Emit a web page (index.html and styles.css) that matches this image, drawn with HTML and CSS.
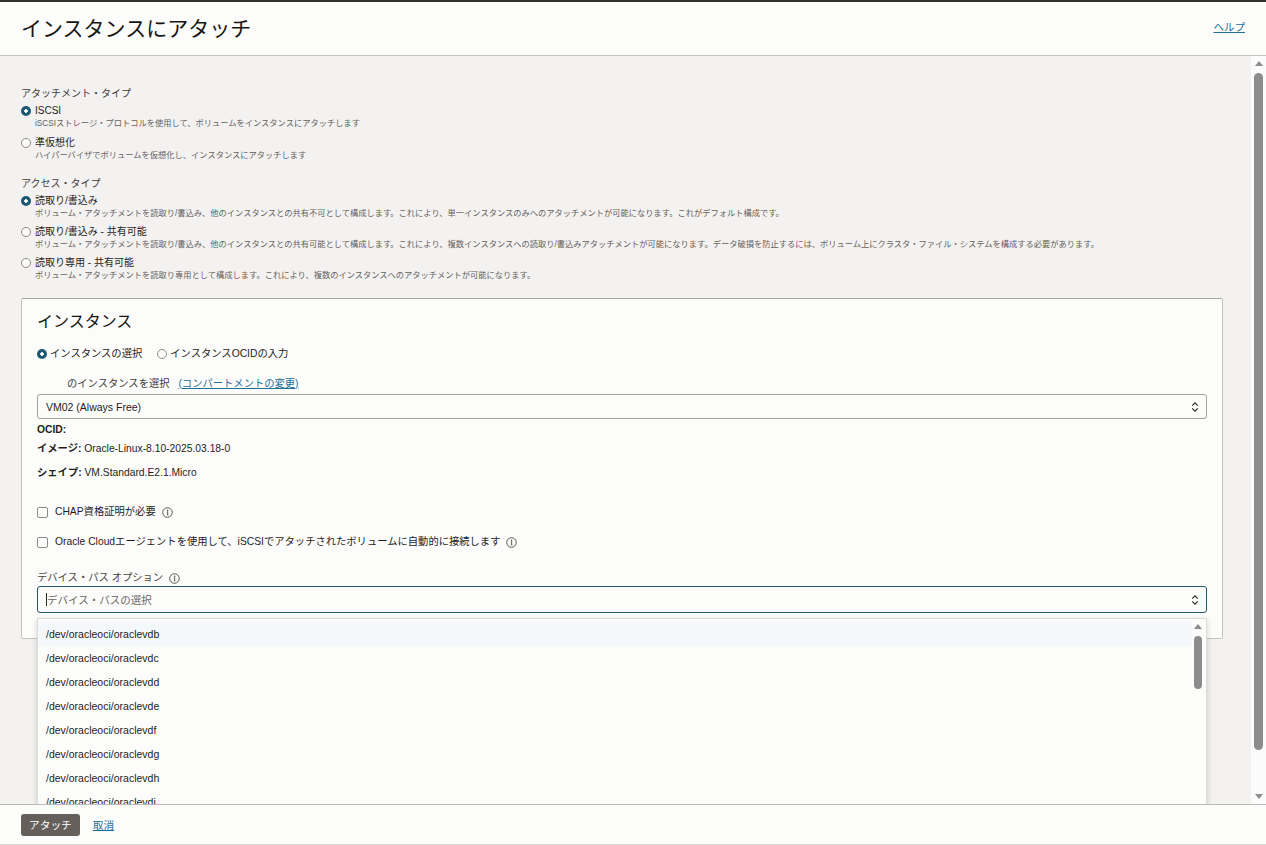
FILE: index.html
```html
<!DOCTYPE html>
<html lang="ja">
<head>
<meta charset="utf-8">
<title>インスタンスにアタッチ</title>
<link rel="stylesheet" href="styles.css">
</head>
<body>
<div class="app">
  <header class="hdr">
    <h1 class="title">インスタンスにアタッチ</h1>
    <a class="help" href="#">ヘルプ</a>
  </header>

  <div class="main">
    <div class="scroll">
      <div class="group">
        <div class="glabel">アタッチメント・タイプ</div>
        <div class="opt">
          <div class="rrow"><span class="radio on"></span><span class="rlabel">ISCSI</span></div>
          <div class="desc">iSCSIストレージ・プロトコルを使用して、ボリュームをインスタンスにアタッチします</div>
        </div>
        <div class="opt">
          <div class="rrow"><span class="radio"></span><span class="rlabel">準仮想化</span></div>
          <div class="desc">ハイパーバイザでボリュームを仮想化し、インスタンスにアタッチします</div>
        </div>
      </div>

      <div class="group g2">
        <div class="glabel">アクセス・タイプ</div>
        <div class="opt">
          <div class="rrow"><span class="radio on"></span><span class="rlabel">読取り/書込み</span></div>
          <div class="desc">ボリューム・アタッチメントを読取り/書込み、他のインスタンスとの共有不可として構成します。これにより、単一インスタンスのみへのアタッチメントが可能になります。これがデフォルト構成です。</div>
        </div>
        <div class="opt">
          <div class="rrow"><span class="radio"></span><span class="rlabel">読取り/書込み - 共有可能</span></div>
          <div class="desc">ボリューム・アタッチメントを読取り/書込み、他のインスタンスとの共有可能として構成します。これにより、複数インスタンスへの読取り/書込みアタッチメントが可能になります。データ破損を防止するには、ボリューム上にクラスタ・ファイル・システムを構成する必要があります。</div>
        </div>
        <div class="opt">
          <div class="rrow"><span class="radio"></span><span class="rlabel">読取り専用 - 共有可能</span></div>
          <div class="desc">ボリューム・アタッチメントを読取り専用として構成します。これにより、複数のインスタンスへのアタッチメントが可能になります。</div>
        </div>
      </div>

      <section class="panel">
        <h2 class="ptitle">インスタンス</h2>
        <div class="prow">
          <span class="pradio"><span class="radio on"></span><span>インスタンスの選択</span></span>
          <span class="pradio"><span class="radio"></span><span>インスタンスOCIDの入力</span></span>
        </div>
        <div class="cmp">のインスタンスを選択 <a class="link" href="#">(コンパートメントの変更)</a></div>
        <div class="select">
          <span class="sval">VM02 (Always Free)</span>
          <svg class="chev" viewBox="0 0 8 12" width="8" height="12"><path d="M1.2 4.6 L4 1.8 L6.8 4.6 M1.2 7.4 L4 10.2 L6.8 7.4" fill="none" stroke="#2a2725" stroke-width="1.1"/></svg>
        </div>
        <div class="kv k1"><b>OCID:</b></div>
        <div class="kv k2"><b>イメージ:</b> Oracle-Linux-8.10-2025.03.18-0</div>
        <div class="kv k3"><b>シェイプ:</b> VM.Standard.E2.1.Micro</div>

        <div class="chk c1"><span class="box"></span><span>CHAP資格証明が必要</span>
          <svg class="info" viewBox="0 0 12 12" width="11" height="11"><circle cx="6" cy="6" r="5.2" fill="none" stroke="#3b3734" stroke-width="0.9"/><circle cx="6.2" cy="3.5" r="0.75" fill="#3b3734"/><path d="M5.2 5.3 H6.4 L5.9 8.6 H7" fill="none" stroke="#3b3734" stroke-width="0.9"/></svg>
        </div>
        <div class="chk c2"><span class="box"></span><span>Oracle Cloudエージェントを使用して、iSCSIでアタッチされたボリュームに自動的に接続します</span>
          <svg class="info" viewBox="0 0 12 12" width="11" height="11"><circle cx="6" cy="6" r="5.2" fill="none" stroke="#3b3734" stroke-width="0.9"/><circle cx="6.2" cy="3.5" r="0.75" fill="#3b3734"/><path d="M5.2 5.3 H6.4 L5.9 8.6 H7" fill="none" stroke="#3b3734" stroke-width="0.9"/></svg>
        </div>

        <div class="dlabel"><span>デバイス・パス オプション</span>
          <svg class="info" viewBox="0 0 12 12" width="11" height="11"><circle cx="6" cy="6" r="5.2" fill="none" stroke="#3b3734" stroke-width="0.9"/><circle cx="6.2" cy="3.5" r="0.75" fill="#3b3734"/><path d="M5.2 5.3 H6.4 L5.9 8.6 H7" fill="none" stroke="#3b3734" stroke-width="0.9"/></svg>
        </div>
        <div class="dwrap">
          <div class="select focus">
            <span class="caret"></span><span class="ph">デバイス・パスの選択</span>
            <svg class="chev" viewBox="0 0 8 12" width="8" height="12"><path d="M1.2 4.6 L4 1.8 L6.8 4.6 M1.2 7.4 L4 10.2 L6.8 7.4" fill="none" stroke="#2a2725" stroke-width="1.1"/></svg>
          </div>
          <div class="drop">
            <ul class="dlist">
              <li class="hl">/dev/oracleoci/oraclevdb</li>
              <li>/dev/oracleoci/oraclevdc</li>
              <li>/dev/oracleoci/oraclevdd</li>
              <li>/dev/oracleoci/oraclevde</li>
              <li>/dev/oracleoci/oraclevdf</li>
              <li>/dev/oracleoci/oraclevdg</li>
              <li>/dev/oracleoci/oraclevdh</li>
              <li>/dev/oracleoci/oraclevdi</li>
            </ul>
            <div class="dscroll">
              <span class="arr up"></span>
              <span class="dthumb"></span>
            </div>
          </div>
        </div>
      </section>
    </div>
    <div class="vscroll">
      <span class="arr up"></span>
      <span class="thumb"></span>
      <span class="arr down"></span>
    </div>
  </div>

  <footer class="ftr">
    <button class="btn" type="button">アタッチ</button>
    <a class="link cancel" href="#">取消</a>
  </footer>
</div>
</body>
</html>
```

FILE: styles.css
```css
* { box-sizing: border-box; }
html, body { margin: 0; padding: 0; }
body {
  font-family: "Liberation Sans", "Noto Sans CJK JP", sans-serif;
  color: #1f1d1b;
  background: #f3f2f1;
}
.app {
  height: 845px;
  display: flex;
  flex-direction: column;
  overflow: hidden;
}

/* header */
.hdr {
  flex: 0 0 56px;
  border-top: 2px solid #34302d;
  border-bottom: 1px solid #c6c3bf;
  background: #fcfcfb;
  display: flex;
  align-items: center;
  justify-content: space-between;
  padding: 0 21px;
}
.title {
  margin: 0;
  font-size: 21px;
  font-weight: 400;
  line-height: 26px;
  color: #161513;
}
.help {
  font-size: 10.5px;
  line-height: 14px;
  color: #1f6f9a;
  text-decoration: underline;
  margin-top: -3px;
}
.link { color: #1f6f9a; text-decoration: underline; }

/* main scroll area */
.main { flex: 1; display: flex; min-height: 0; }
.scroll {
  flex: 1;
  overflow: hidden;
  padding: 31px 28px 0 21px;
}
.vscroll {
  flex: 0 0 15px;
  background: #fbfbfb;
  display: flex;
  flex-direction: column;
  align-items: center;
  padding: 5px 0 5px;
}
.arr { width: 0; height: 0; border-left: 4px solid transparent; border-right: 4px solid transparent; }
.arr.up { border-bottom: 5px solid #8c8c8c; }
.arr.down { border-top: 5px solid #8c8c8c; margin-top: auto; }
.thumb {
  width: 9px;
  height: 677px;
  margin-top: 7px;
  background: #8c8c8c;
  border-radius: 5px;
}

/* radio groups */
.glabel {
  font-size: 10px;
  line-height: 14px;
  color: #3f3b38;
}
.g2 { margin-top: 15px; }
.opt { margin-top: 6px; }
.glabel + .opt { margin-top: 3px; }
.g2 .opt { margin-top: 5px; }
.g2 .glabel + .opt { margin-top: 3px; }
.rrow {
  display: flex;
  align-items: center;
  font-size: 10px;
  line-height: 14px;
  color: #1f1d1b;
}
.radio {
  flex: 0 0 10px;
  width: 10px;
  height: 10px;
  border-radius: 50%;
  border: 1px solid #8e8984;
  background: #fff;
  margin-right: 4px;
}
.radio.on {
  border: none;
  background: radial-gradient(circle, #fff 0 1.5px, #1d5a72 2px);
}
.desc {
  font-size: 8.25px;
  line-height: 12px;
  color: #66615d;
  padding-left: 14px;
  white-space: nowrap;
}

/* instance panel */
.panel {
  margin-top: 16px;
  background: #fcfcfb;
  border: 1px solid #c5c2be;
  border-top-color: #aaa6a2;
  border-radius: 2px;
  padding: 12px 15px 25px;
}
.ptitle {
  margin: 0;
  font-size: 16px;
  font-weight: 400;
  line-height: 22px;
  color: #161513;
}
.prow {
  margin-top: 14px;
  display: flex;
  gap: 15px;
  font-size: 10.3px;
  line-height: 14px;
}
.pradio { display: flex; align-items: center; }
.pradio .radio { margin-right: 3px; }
.cmp {
  margin-top: 16px;
  padding-left: 30px;
  font-size: 10.3px;
  line-height: 14px;
  color: #3f3b38;
}
.cmp .link { margin-left: 6px; }
.select {
  margin-top: 3px;
  height: 25px;
  border: 1px solid #a4a09c;
  border-radius: 3px;
  background: #fcfcfb;
  display: flex;
  align-items: center;
  padding: 0 7px 0 8px;
  font-size: 10.5px;
  color: #1f1d1b;
}
.sval { flex: 1; }
.chev { margin-left: auto; }
.kv {
  font-size: 10.3px;
  line-height: 14px;
  color: #1f1d1b;
}
.kv b { font-weight: 700; }
.k1 { margin-top: 4px; }
.k2 { margin-top: 5px; }
.k3 { margin-top: 10px; }

.chk {
  display: flex;
  align-items: center;
  font-size: 10.3px;
  line-height: 14px;
  color: #1f1d1b;
}
.c1 { margin-top: 25px; }
.c2 { margin-top: 16px; }
.box {
  flex: 0 0 11px;
  width: 11px;
  height: 11px;
  border: 1px solid #8f8a86;
  border-radius: 2px;
  background: #fff;
  margin-right: 7px;
}
.info { margin-left: 6px; flex: 0 0 11px; }

.dlabel {
  margin-top: 22px;
  display: flex;
  align-items: center;
  font-size: 10.3px;
  line-height: 14px;
  color: #4a4542;
}
.dwrap { position: relative; margin-top: 1px; }
.select.focus {
  margin-top: 0;
  height: 27px;
  border-color: #24586d;
  padding-left: 8px;
}
.caret {
  width: 1px;
  height: 13px;
  background: #2a2725;
}
.ph { color: #6b6662; font-size: 10.5px; }

/* dropdown overlay */
.drop {
  position: absolute;
  left: 0;
  right: 0;
  top: 32px;
  height: 200px;
  background: #fcfcfb;
  border: 1px solid #dedbd8;
  box-shadow: 0 2px 6px rgba(0, 0, 0, 0.16);
  display: flex;
  z-index: 5;
}
.dlist {
  flex: 1;
  list-style: none;
  margin: 0;
  padding: 3px 0 0;
}
.dlist li {
  height: 24px;
  line-height: 24px;
  padding-left: 8px;
  font-size: 10.5px;
  color: #1f1d1b;
}
.dlist li.hl { background: #f4f8fb; }
.dscroll {
  flex: 0 0 14px;
  display: flex;
  flex-direction: column;
  align-items: center;
  padding-top: 5px;
  padding-right: 2px;
}
.dthumb {
  width: 8px;
  height: 53px;
  margin-top: 7px;
  background: #8c8c8c;
  border-radius: 4px;
}

/* footer */
.ftr {
  flex: 0 0 41px;
  border-top: 1px solid #bdb9b5;
  border-bottom: 1px solid #dad8d5;
  background: #fcfcfb;
  display: flex;
  align-items: center;
  padding: 0 21px;
  gap: 13px;
}
.btn {
  height: 22px;
  padding: 0 8px;
  border: none;
  border-radius: 3px;
  background: #655f5c;
  color: #fff;
  font-family: "Liberation Sans", "Noto Sans CJK JP", sans-serif;
  font-size: 10.7px;
  line-height: 22px;
}
.cancel { font-size: 10.7px; line-height: 16px; }
```
